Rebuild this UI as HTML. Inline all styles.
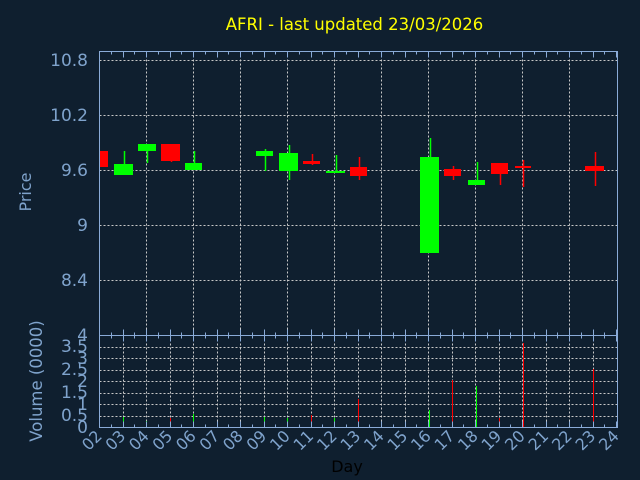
<!DOCTYPE html>
<html><head><meta charset="utf-8"><style>
html,body{margin:0;padding:0;background:#0f1f2f;}
svg{display:block;font-family:"DejaVu Sans","Liberation Sans",sans-serif;}
</style></head><body>
<svg id="s" width="640" height="480" xmlns="http://www.w3.org/2000/svg">
<rect width="640" height="480" fill="#0f1f2f"/>
<g id="g"></g>
<text x="354.5" y="30" fill="#ffff00" font-size="16.5" text-anchor="middle">AFRI - last updated 23/03/2026</text>
<g fill="#7fa3cc" font-size="17" text-anchor="end">
<text x="88" y="66">10.8</text>
<text x="88" y="121">10.2</text>
<text x="88" y="176">9.6</text>
<text x="88" y="231">9</text>
<text x="88" y="286">8.4</text>
<text x="88" y="341">4</text>
<text x="88" y="352">3.5</text>
<text x="88" y="364">3</text>
<text x="88" y="375">2.5</text>
<text x="88" y="387">2</text>
<text x="88" y="398">1.5</text>
<text x="88" y="410">1</text>
<text x="88" y="421">0.5</text>
<text x="88" y="433">0</text>
</g>
<text transform="translate(31,192) rotate(-90)" fill="#7fa3cc" font-size="16" text-anchor="middle">Price</text>
<text transform="translate(42,381) rotate(-90)" fill="#7fa3cc" font-size="16.5" text-anchor="middle">Volume (0000)</text>
<g fill="#7fa3cc" font-size="16" text-anchor="end">
<text transform="translate(103,437) rotate(-45)">02</text>
<text transform="translate(126.5,437) rotate(-45)">03</text>
<text transform="translate(150,437) rotate(-45)">04</text>
<text transform="translate(173.5,437) rotate(-45)">05</text>
<text transform="translate(197,437) rotate(-45)">06</text>
<text transform="translate(220.5,437) rotate(-45)">07</text>
<text transform="translate(244,437) rotate(-45)">08</text>
<text transform="translate(267.5,437) rotate(-45)">09</text>
<text transform="translate(291,437) rotate(-45)">10</text>
<text transform="translate(314.5,437) rotate(-45)">11</text>
<text transform="translate(338,437) rotate(-45)">12</text>
<text transform="translate(361.5,437) rotate(-45)">13</text>
<text transform="translate(385,437) rotate(-45)">14</text>
<text transform="translate(408.5,437) rotate(-45)">15</text>
<text transform="translate(432,437) rotate(-45)">16</text>
<text transform="translate(455.5,437) rotate(-45)">17</text>
<text transform="translate(479,437) rotate(-45)">18</text>
<text transform="translate(502.5,437) rotate(-45)">19</text>
<text transform="translate(526,437) rotate(-45)">20</text>
<text transform="translate(549.5,437) rotate(-45)">21</text>
<text transform="translate(573,437) rotate(-45)">22</text>
<text transform="translate(596.5,437) rotate(-45)">23</text>
<text transform="translate(620,437) rotate(-45)">24</text>
</g>
<text x="347" y="472" fill="#000000" font-size="16" text-anchor="middle">Day</text>
</svg>
<script>
var g=document.getElementById('g'),NS='http://www.w3.org/2000/svg';
function el(t,a){var e=document.createElementNS(NS,t);for(var k in a)e.setAttribute(k,a[k]);g.appendChild(e);return e;}
var L=99.5,R=617.5,T=51.5,M=335.5,B=427.5,dash='#c8c8c8';
[60,115,170,225,280].forEach(function(y){el('line',{x1:L,x2:R,y1:y+.5,y2:y+.5,stroke:dash,'stroke-dasharray':'2,2'});});
for(var d=4;d<24;d+=2){var x=Math.round(99+(d-2)*23.5)+.5;el('line',{x1:x,x2:x,y1:T,y2:M,stroke:dash,'stroke-dasharray':'2,2'});}
for(var i=1;i<8;i++){var y=Math.round(427-i*11.5)+.5;el('line',{x1:L,x2:R,y1:y,y2:y,stroke:dash,'stroke-dasharray':'2,2'});}
for(var d=3;d<24;d++){var x=Math.round(99+(d-2)*23.5)+.5;el('line',{x1:x,x2:x,y1:M,y2:B,stroke:dash,'stroke-dasharray':'2,2'});}
var G='#00ff00',Rd='#ff0000';
var c=[[99,108,151,167,null,null,Rd],
[114,133,164,175,151,175,G],[138,156,144,151,144,163,G],[161,180,144,161,144,162,Rd],[185,202,163,170,151,170,G],
[256,273,151,156,149,171,G],[279,298,153,171,145,180,G],[303,320,161,164,154,165,Rd],[326,345,171,173,155,173,G],
[350,367,167,176,157,180,Rd],[420,439,157,253,138,253,G],[444,461,169,176,166,180,Rd],[468,485,180,185,162,185,G],
[491,508,163,174,163,185,Rd],[515,531,166,168,160,187,Rd],[585,604,166,171,152,186,Rd]];
c.forEach(function(k){var cx=Math.round((k[0]+k[1])/2)+.5;
if(k[4]!=null)el('line',{x1:cx,x2:cx,y1:k[4],y2:k[5],stroke:k[6],'stroke-width':1.5});
el('rect',{x:k[0],y:k[2],width:k[1]-k[0],height:Math.max(2,k[3]-k[2]),fill:k[6]});});
var v=[[123,417,G],[146,421,G],[170,418,Rd],[193,414,G],[264,417,G],[287,418,G],[311,415,Rd],[334,418,G],[358,399,Rd],[429,410,G],[452,380,Rd],[476,386,G],[499,418,Rd],[523,343,Rd],[593,369,Rd]];
v.forEach(function(k){el('rect',{x:k[0],y:k[1],width:1,height:427-k[1],fill:k[2]});});
var ax='#8aabd8';
[[T,M],[M,B]].forEach(function(p){el('rect',{x:L,y:p[0],width:R-L,height:p[1]-p[0],fill:'none',stroke:ax});});
for(var i=0;i<=44;i++){var x=Math.round(99+i*11.75)+.5;var len=(i%2==0)?6:3;
[[T,1],[M,-1],[M,1],[B,-1]].forEach(function(p){el('line',{x1:x,x2:x,y1:p[0],y2:p[0]+p[1]*len,stroke:ax});});}
</script>
</body></html>
